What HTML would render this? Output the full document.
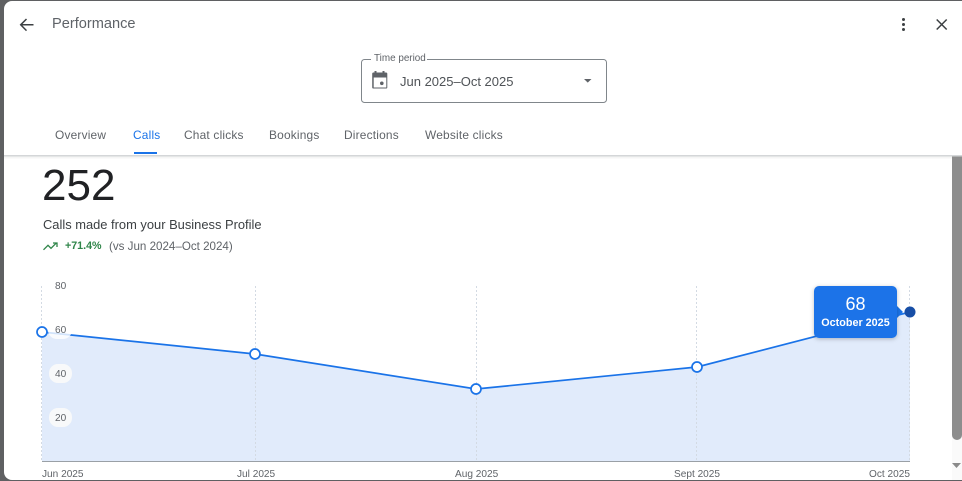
<!DOCTYPE html>
<html><head><meta charset="utf-8"><style>
html,body{margin:0;padding:0;width:962px;height:481px;overflow:hidden;background:#5f6062;font-family:"Liberation Sans",sans-serif}
.t{position:absolute;white-space:nowrap;line-height:1}
#d{position:absolute;left:4px;top:1px;width:958px;height:479px;background:#fff;border-radius:8px 0 0 8px;overflow:hidden}
#w{position:absolute;left:0;top:0;width:962px;height:481px}
.tab{font-size:11.9px;letter-spacing:.2px;color:#5f6368;top:130px}
.ax{font-size:10.1px;color:#5f6368}
</style></head><body>
<div id="d"></div>
<div id="w">
<svg style="position:absolute;left:0;top:0" width="962" height="481">
<defs><filter id="s" x="-20%" y="-20%" width="140%" height="150%"><feDropShadow dx="0" dy="1" stdDeviation="2" flood-color="#000" flood-opacity=".25"/></filter></defs>
<rect x="952" y="156" width="10" height="324" fill="#fafafa"/>
<path d="M952 156h10v279a5 5 0 0 1-5 5a5 5 0 0 1-5-5z" fill="#8d8d8d"/>
<path d="M952 463h9l-4.500 5z" fill="#8a8a8a"/>
<path d="M42 332L255 354L476 389L697 367L910 312V461H42Z" fill="#e1ebfb"/>
<g stroke="#d3dae3" stroke-width="1" stroke-dasharray="2 2">
<path d="M41.500 286V461M255.500 286V461M476.500 286V461M696.500 286V461M909.500 286V461"/></g>
<path d="M42 461.500H910" stroke="#9aa0a6" stroke-width="1"/>
<path d="M42 332L255 354L476 389L697 367L910 312" fill="none" stroke="#1a73e8" stroke-width="1.700"/>
<rect x="48" y="321" width="24" height="18" rx="9" fill="#fff" opacity=".8"/>
<rect x="49" y="364" width="23" height="19" rx="9" fill="#f8f9fa"/>
<rect x="49" y="408" width="23" height="19" rx="9" fill="#f8f9fa"/>
<g fill="#fff" stroke="#1a73e8" stroke-width="1.700">
<circle cx="42" cy="332" r="5"/><circle cx="255" cy="354" r="5"/><circle cx="476" cy="389" r="5"/><circle cx="697" cy="367" r="5"/></g>
<circle cx="910" cy="312" r="5.500" fill="#174ea6"/>
<path d="M897 306l6 6-6 6z" fill="#1a73e8"/>
<rect x="814" y="286" width="83" height="52" rx="5" fill="#1a73e8" filter="url(#s)"/>
<rect x="4" y="155" width="958" height="1.500" fill="#d4d6d8"/>
<rect x="4" y="156.500" width="948" height="2" fill="#f5f5f5"/>
<path d="M33.500 24.800H21.500M26.500 19L20.700 24.800L26.500 30.600" fill="none" stroke="#3c4043" stroke-width="1.500"/>
<g fill="#3c4043"><circle cx="903.500" cy="19.500" r="1.500"/><circle cx="903.500" cy="24.500" r="1.500"/><circle cx="903.500" cy="29.500" r="1.500"/></g>
<path d="M936.700 19.500L946.700 29.500M946.700 19.500L936.700 29.500" stroke="#3c4043" stroke-width="1.500"/>
<rect x="361.500" y="59.500" width="245" height="43" rx="3" fill="none" stroke="#80868b" stroke-width="1"/>
<rect x="371" y="56" width="56" height="6" fill="#fff"/>
<path d="M373 72.500h1.500v-1.500h2v1.500h6v-1.500h2v1.500h1.500a1.300 1.300 0 0 1 1.300 1.300v13.400a1.300 1.300 0 0 1-1.300 1.300h-12.500a1.300 1.300 0 0 1-1.300-1.300v-13.400a1.300 1.300 0 0 1 .8-1.300zM373.700 77.500v10h12.600v-10z" fill="#5f6368" fill-rule="evenodd"/>
<circle cx="381.800" cy="83.300" r="1.800" fill="#5f6368"/>
<path d="M584 79h7.500l-3.750 3.600z" fill="#5f6368"/>
<rect x="134" y="152" width="23" height="2" fill="#1a73e8"/>
<path d="M43.500 249.800l4.500-4.500 3 3 5-5M53 243h4v4" fill="none" stroke="#2f8549" stroke-width="1.300"/>
</svg>
<div class="t" style="left:52px;top:17px;font-size:14.600px;color:#5f6368">Performance</div>
<div class="t" style="left:374px;top:54px;font-size:9.900px;color:#5f6368">Time period</div>
<div class="t" style="left:400px;top:75px;font-size:13px;color:#4f5357">Jun 2025–Oct 2025</div>
<div class="t tab" style="left:55px">Overview</div>
<div class="t tab" style="left:133px;color:#1a73e8">Calls</div>
<div class="t tab" style="left:184px">Chat clicks</div>
<div class="t tab" style="left:269px">Bookings</div>
<div class="t tab" style="left:344px">Directions</div>
<div class="t tab" style="left:425px">Website clicks</div>
<div class="t" style="left:42px;top:164px;font-size:44px;color:#202124">252</div>
<div class="t" style="left:43px;top:219px;font-size:12.900px;color:#3c4043">Calls made from your Business Profile</div>
<div class="t" style="left:65px;top:241px;font-size:10.700px;color:#2f8549;font-weight:bold">+71.4%</div>
<div class="t" style="left:109px;top:241px;font-size:11.600px;color:#5f6368">(vs Jun 2024–Oct 2024)</div>
<div class="t ax" style="left:55px;top:282px">80</div>
<div class="t ax" style="left:55px;top:326px">60</div>
<div class="t ax" style="left:55px;top:370px">40</div>
<div class="t ax" style="left:55px;top:414px">20</div>
<div class="t ax" style="left:42px;top:470px">Jun 2025</div>
<div class="t ax" style="left:237px;top:470px">Jul 2025</div>
<div class="t ax" style="left:455px;top:470px">Aug 2025</div>
<div class="t ax" style="left:674px;top:470px">Sept 2025</div>
<div class="t ax" style="left:869px;top:470px">Oct 2025</div>
<div class="t" style="left:814px;width:83px;text-align:center;top:295px;font-size:18px;color:#fff">68</div>
<div class="t" style="left:814px;width:83px;text-align:center;top:318px;font-size:10.800px;font-weight:bold;color:#fff">October 2025</div>
</div>
</body></html>
